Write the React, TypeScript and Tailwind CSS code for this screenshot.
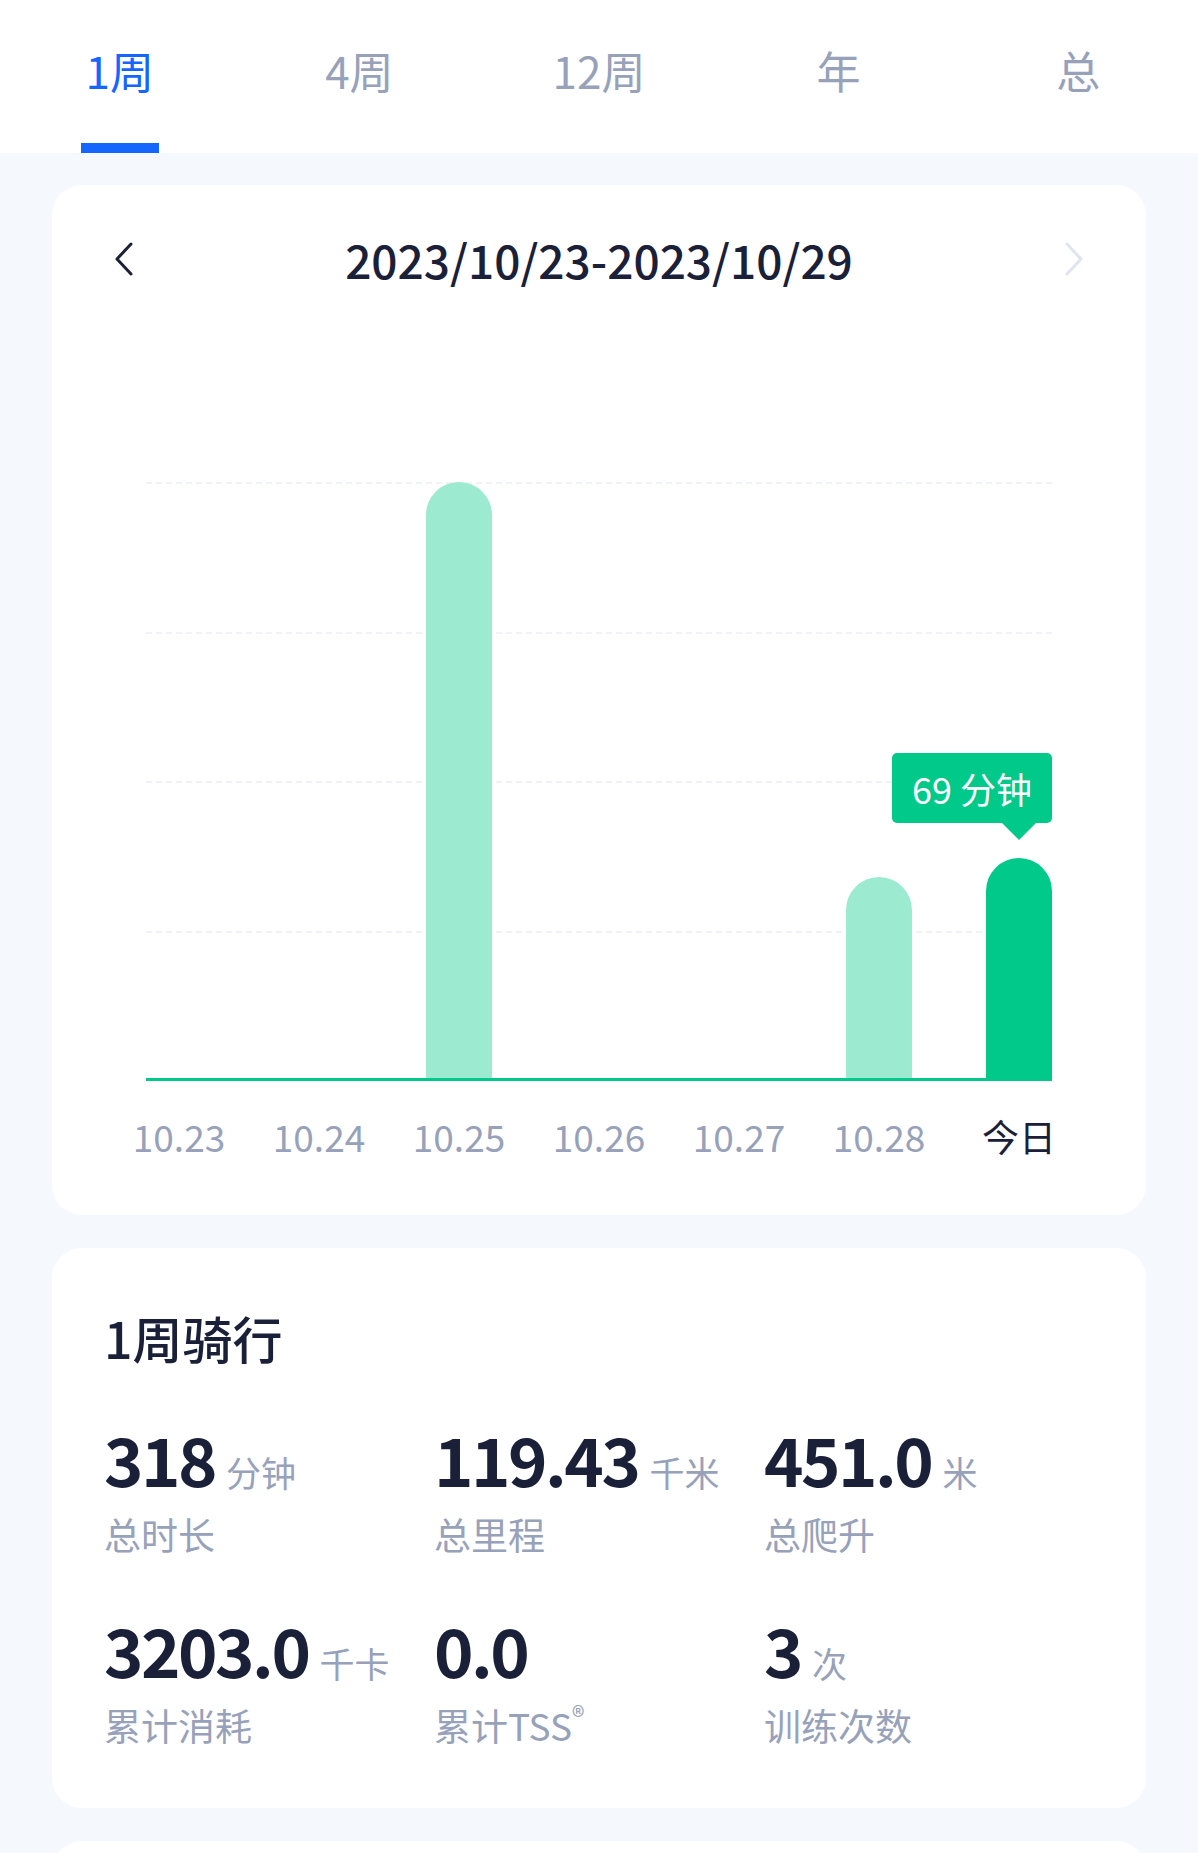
import React from 'react';

const font = { fontFamily: '"Noto Sans CJK SC", "Noto Sans", sans-serif' };

const tabs = ['1周', '4周', '12周', '年', '总'];

// minutes per day, max = 10.25
const days = [
  { label: '10.23', value: 0 },
  { label: '10.24', value: 0 },
  { label: '10.25', value: 186 },
  { label: '10.26', value: 0 },
  { label: '10.27', value: 0 },
  { label: '10.28', value: 63 },
  { label: '今日', value: 69, today: true },
];

const stats = [
  { value: '318', unit: '分钟', label: '总时长' },
  { value: '119.43', unit: '千米', label: '总里程' },
  { value: '451.0', unit: '米', label: '总爬升' },
  { value: '3203.0', unit: '千卡', label: '累计消耗' },
  { value: '0.0', unit: '', label: '累计TSS', reg: true },
  { value: '3', unit: '次', label: '训练次数' },
];

const Chevron: React.FC<{ dir: 'left' | 'right'; color: string }> = ({ dir, color }) => (
  <svg width="24" height="36" viewBox="0 0 24 36" fill="none">
    <polyline
      points={dir === 'left' ? '19,3 5,18 19,33' : '5,3 19,18 5,33'}
      stroke={color}
      strokeWidth="3"
      strokeLinecap="round"
      strokeLinejoin="round"
    />
  </svg>
);

const CHART_H = 598;
const MAX = 186;

export default function App() {
  return (
    <div className="w-full min-h-[1853px] bg-[#f5f8fd] overflow-hidden" style={font}>
      {/* Tabs */}
      <div className="h-[153px] bg-white flex">
        {tabs.map((t, i) => (
          <div key={t} className="flex-1 h-full flex flex-col items-center">
            <span
              className={`pt-[40px] text-[44px] leading-[60px] ${i === 0 ? 'text-[#1565ff]' : 'text-[#97a2ba]'}`}
            >
              {t}
            </span>
            {i === 0 && <div className="mt-auto h-[10px] w-[78px] bg-[#1565ff]" />}
          </div>
        ))}
      </div>

      <div className="px-[52px] pt-[32px]">
        {/* Chart card */}
        <div className="bg-white rounded-[30px] h-[1030px] pt-[44px]">
          <div className="flex items-center justify-between px-[60px] h-[60px]">
            <Chevron dir="left" color="#1b2039" />
            <span className="text-[46px] leading-[60px] font-medium text-[#1b2039]">
              2023/10/23-2023/10/29
            </span>
            <Chevron dir="right" color="#dfe4ee" />
          </div>

          <div className="px-[94px] mt-[193px]">
            <div className="relative">
              {/* grid lines */}
              {[0, 1, 2, 3].map((k) => (
                <div
                  key={k}
                  className="absolute left-0 right-0 h-0 border-t-2 border-dashed border-[#f0f2f7]"
                  style={{ top: (k * CHART_H) / 4 }}
                />
              ))}
              <div className="relative flex items-end justify-between h-[598px]">
                {days.map((d) => (
                  <div key={d.label} className="relative w-[66px] h-full flex items-end">
                    {d.value > 0 && (
                      <div
                        className={`relative w-full rounded-t-full ${d.today ? 'bg-[#00c98a]' : 'bg-[#9ceacf]'}`}
                        style={{ height: (d.value / MAX) * CHART_H }}
                      >
                        {d.today && (
                          <div className="absolute right-0 bottom-[calc(100%+18px)] flex flex-col items-end">
                            <div className="w-[160px] h-[70px] rounded-[5px] bg-[#00c98a] flex items-center justify-center text-white text-[36px] leading-none whitespace-nowrap">
                              {d.value} 分钟
                            </div>
                            <div className="mr-[16px] w-0 h-0 border-l-[17px] border-r-[17px] border-t-[17px] border-l-transparent border-r-transparent border-t-[#00c98a]" />
                          </div>
                        )}
                      </div>
                    )}
                  </div>
                ))}
              </div>
              <div className="relative h-[3px] -mt-[2px] bg-[#00c98a]" />
            </div>

            <div className="flex justify-between mt-[29px]">
              {days.map((d) => (
                <div key={d.label} className="w-[66px] flex justify-center">
                  <span
                    className={`whitespace-nowrap text-[37px] leading-[52px] ${d.today ? 'text-[#1b2039]' : 'text-[#97a2ba]'}`}
                  >
                    {d.label}
                  </span>
                </div>
              ))}
            </div>
          </div>
        </div>

        {/* Summary card */}
        <div className="mt-[33px] bg-white rounded-[30px] px-[52px] pt-[57px] pb-[58px]">
          <h2 className="text-[50px] leading-[64px] font-medium text-[#1b2039]">1周骑行</h2>
          <div className="mt-[49px] grid grid-cols-3 gap-y-[50px]">
            {stats.map((s) => (
              <div key={s.label} className="flex flex-col">
                <div className="flex items-baseline h-[80px]">
                  <span className="text-[67px] leading-[80px] font-bold tracking-[-2.5px] text-[#1b2039]">
                    {s.value}
                  </span>
                  {s.unit && (
                    <span className="ml-[11px] text-[35px] leading-[40px] text-[#97a2ba]">{s.unit}</span>
                  )}
                </div>
                <div className="mt-[11px] h-[50px] text-[37px] leading-[50px] text-[#97a2ba] whitespace-nowrap">
                  {s.label}
                  {s.reg && <span className="text-[26px] align-top leading-[30px]">®</span>}
                </div>
              </div>
            ))}
          </div>
        </div>

        {/* Next card peeking */}
        <div className="mt-[33px] bg-white rounded-t-[30px] h-[200px]" />
      </div>
    </div>
  );
}
